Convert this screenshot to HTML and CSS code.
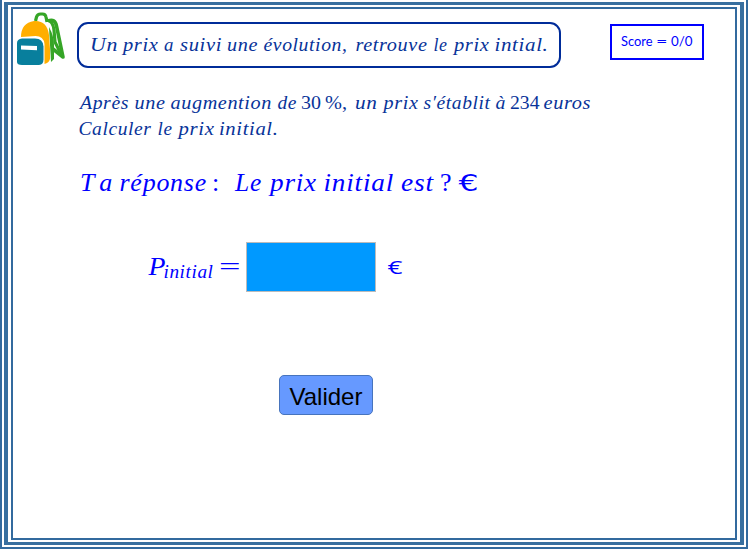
FILE: index.html
```html
<!DOCTYPE html>
<html lang="fr">
<head>
<meta charset="utf-8">
<title>Retrouver le prix initial</title>
<link rel="stylesheet" href="styles.css">
</head>
<body>
<div class="frame-outer"><div class="frame-middle"><main class="sheet">
  <header class="header">
    <svg class="bag" width="52" height="56" viewBox="15 11 52 56" aria-hidden="true">
      <path d="M35.500 21l1-4q1-3 4-3h2q3 0 3.500 3l1 5" fill="none" stroke="#35a526" stroke-width="3.200"/>
      <path d="M48 21q7-3 8.500 5l6.500 31l-10-8" fill="none" stroke="#35a526" stroke-width="3.600" stroke-linejoin="round"/>
      <path d="M47 20q6 1 7 10l1 12l6 12" fill="none" stroke="#35a526" stroke-width="3.200"/>
      <path d="M49 27q5 9 5 18v14l-3 3z" fill="#35a526"/>
      <path d="M21 37q0-14 13-16q13-1 15 14l1 14v10q-1 4-5.500 5V44q-1-8-9-8z" fill="#ffae00"/>
      <path d="M17 43q0-4 5-4.500h13q8 0 8.500 8v13q0 5-4.500 5.500H22q-5 0-5-3z" fill="#087f9d"/>
      <path d="M21 45.500l16 .5v4.200l-16-.7z" fill="#fff"/>
    </svg>
    <h1 class="title">
      <svg class="line" width="480" height="42" viewBox="79 24 480 42">
        <text y="50.500"><tspan x="90" textLength="28" lengthAdjust="spacingAndGlyphs">Un</tspan> <tspan x="123" textLength="35.500" lengthAdjust="spacingAndGlyphs">prix</tspan> <tspan x="164" textLength="10" lengthAdjust="spacingAndGlyphs">a</tspan> <tspan x="180" textLength="42" lengthAdjust="spacingAndGlyphs">suivi</tspan> <tspan x="227" textLength="31" lengthAdjust="spacingAndGlyphs">une</tspan> <tspan x="263.500" textLength="84" lengthAdjust="spacingAndGlyphs">évolution,</tspan> <tspan x="355.500" textLength="72" lengthAdjust="spacingAndGlyphs">retrouve</tspan> <tspan x="433.500" textLength="14" lengthAdjust="spacingAndGlyphs">le</tspan> <tspan x="454" textLength="35.500" lengthAdjust="spacingAndGlyphs">prix</tspan> <tspan x="494.500" textLength="54" lengthAdjust="spacingAndGlyphs">intial.</tspan></text>
      </svg>
    </h1>
    <div class="score">
      <svg class="line" width="88" height="32" viewBox="613 26 88 32">
        <text y="46"><tspan x="622" textLength="31.500" lengthAdjust="spacingAndGlyphs">Score</tspan> <tspan x="657" textLength="11.500" lengthAdjust="spacingAndGlyphs">=</tspan> <tspan x="672" textLength="21.500" lengthAdjust="spacingAndGlyphs">0/0</tspan></text>
      </svg>
    </div>
  </header>
  <section class="question">
    <svg class="line" width="530" height="56" viewBox="75 88 530 56">
      <text y="108"><tspan x="80" textLength="49" lengthAdjust="spacingAndGlyphs">Après</tspan> <tspan x="134.500" textLength="31" lengthAdjust="spacingAndGlyphs">une</tspan> <tspan x="170.500" textLength="101.500" lengthAdjust="spacingAndGlyphs">augmention</tspan> <tspan x="277.500" textLength="19.500" lengthAdjust="spacingAndGlyphs">de</tspan> <tspan class="roman" x="301" textLength="20" lengthAdjust="spacingAndGlyphs">30</tspan> <tspan class="roman" x="325" textLength="22" lengthAdjust="spacingAndGlyphs">%,</tspan> <tspan x="355" textLength="22.500" lengthAdjust="spacingAndGlyphs">un</tspan> <tspan x="383.500" textLength="35" lengthAdjust="spacingAndGlyphs">prix</tspan> <tspan x="423.500" textLength="67" lengthAdjust="spacingAndGlyphs">s′établit</tspan> <tspan x="495.500" textLength="10.500" lengthAdjust="spacingAndGlyphs">à</tspan> <tspan class="roman" x="510" textLength="29.500" lengthAdjust="spacingAndGlyphs">234</tspan> <tspan x="543.500" textLength="47.500" lengthAdjust="spacingAndGlyphs">euros</tspan></text>
      <text y="134"><tspan x="78.500" textLength="73" lengthAdjust="spacingAndGlyphs">Calculer</tspan> <tspan x="157.500" textLength="15" lengthAdjust="spacingAndGlyphs">le</tspan> <tspan x="178.500" textLength="36" lengthAdjust="spacingAndGlyphs">prix</tspan> <tspan x="219" textLength="59.500" lengthAdjust="spacingAndGlyphs">initial.</tspan></text>
    </svg>
  </section>
  <section class="prompt">
    <svg class="line" width="420" height="40" viewBox="75 162 420 40">
      <text y="190"><tspan x="80" textLength="33">Ta</tspan> <tspan x="119.500" textLength="87.500" lengthAdjust="spacingAndGlyphs">réponse</tspan> <tspan class="roman" x="212">:</tspan> <tspan x="235" textLength="27" lengthAdjust="spacingAndGlyphs">Le</tspan> <tspan x="270" textLength="47" lengthAdjust="spacingAndGlyphs">prix</tspan> <tspan x="323.500" textLength="70.500" lengthAdjust="spacingAndGlyphs">initial</tspan> <tspan x="401" textLength="33" lengthAdjust="spacingAndGlyphs">est</tspan> <tspan class="roman" x="440">?</tspan> <tspan class="euro" x="458.500" textLength="20" lengthAdjust="spacingAndGlyphs">€</tspan></text>
    </svg>
  </section>
  <form class="answer">
    <svg class="line" width="99" height="40" viewBox="147 248 99 40">
      <text y="274.500"><tspan x="148.500" textLength="17" lengthAdjust="spacingAndGlyphs">P</tspan><tspan class="sub" x="163.500" y="278" textLength="50" lengthAdjust="spacingAndGlyphs">initial</tspan> <tspan class="equals" x="219" y="275" textLength="21.500" lengthAdjust="spacingAndGlyphs">=</tspan></text>
    </svg>
    <input class="field" type="text" aria-label="Prix initial">
    <svg class="line unit" width="24" height="40" viewBox="382 248 24 40">
      <text x="387.500" y="274" textLength="15" lengthAdjust="spacingAndGlyphs">€</text>
    </svg>
  </form>
  <button class="submit" type="button">Valider</button>
</main></div></div>
</body>
</html>
```
FILE: styles.css
```css
* { box-sizing: border-box; }
body { margin: 0; width: 750px; height: 550px; overflow: hidden; background: #fff; }
.frame-outer {
  width: 748px; height: 549px; padding: 2px;
  border: solid #336a9e; border-width: 0 2px 2px;
}
.frame-middle {
  width: 740px; height: 543px; padding: 2px 3px 3px;
  border: solid #386f9f; border-width: 3px 4px 3px;
}
.sheet {
  width: 726px; height: 533px;
  border: 2px solid #336a9e;
  display: flow-root;
}
.header { display: flex; align-items: flex-start; height: 80px; padding: 2px 0 0 2px; }
.bag { flex: none; }
.line { display: block; overflow: visible; }
.line text { white-space: pre; }
.title {
  width: 484px; height: 46px; margin: 11px 0 0 10px;
  border: 2px solid #002c99; border-radius: 11px;
  font: italic 19.5px "Liberation Serif", serif;
  letter-spacing: 0.03em;
}
.title text, .question text { fill: #083399; }
.score {
  width: 94px; height: 36px; margin: 13px 0 0 49px;
  border: 2px solid #0000ff;
  font: 13.5px Lato, sans-serif;
}
.score text { fill: #00f; }
.question {
  padding-left: 62px;
  font: italic 19.5px "Liberation Serif", serif;
  letter-spacing: 0.03em;
}
.roman { font-style: normal; letter-spacing: 0; }
.prompt {
  padding: 18px 0 0 62px;
  font: italic 26px "Liberation Serif", serif;
  letter-spacing: 0.03em;
}
.prompt text, .answer text { fill: #00f; }
.euro { font: 23.5px "DejaVu Sans", sans-serif; letter-spacing: 0; }
.answer { display: flex; margin: 39px 0 0 134px; font: italic 26px "Liberation Serif", serif; }
.answer .line { margin-top: 6px; }
.sub { font-size: 18.5px; letter-spacing: 0.03em; }
.equals { font-style: normal; }
.field {
  width: 130px; height: 50px; padding: 4px 8px;
  border: 1px solid #bbb; background: #0099ff;
  font: 24px "Liberation Sans", sans-serif;
}
.answer .unit { margin-left: 6px; font: 18.5px "Open Sans", sans-serif; }
.submit {
  display: block; width: 94px; height: 40px; margin: 83px 0 0 266px; padding: 3px 0 0;
  border: 1px solid #4774bd; border-radius: 5px; background: #6699ff; color: #000;
  font: 24px "Liberation Sans", sans-serif;
}
```
